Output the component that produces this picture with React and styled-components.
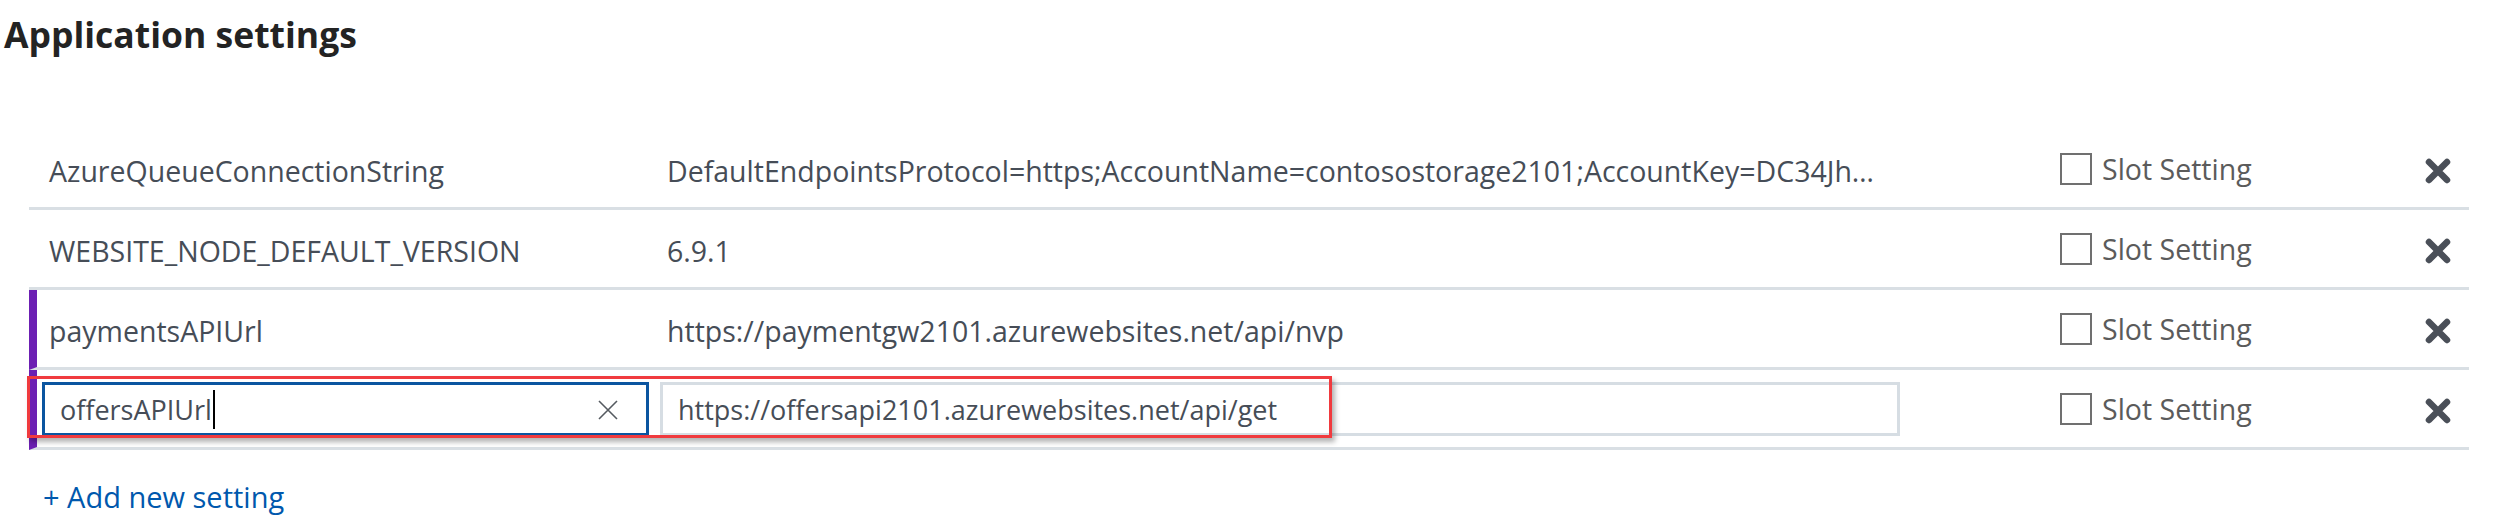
import React from 'react';
import styled, { createGlobalStyle } from 'styled-components';

const GlobalStyle = createGlobalStyle`
  html, body { margin: 0; padding: 0; background: #ffffff; }
  body { font-family: "Open Sans", "Noto Sans", sans-serif; }
`;

const Page = styled.div`
  width: 2507px;
  height: 520px;
  box-sizing: border-box;
  padding-top: 13px;
  overflow: hidden;
`;

const Title = styled.h2`
  margin: 0 0 0 4px;
  font-size: 35.5px;
  font-weight: 700;
  line-height: 42px;
  color: #232323;
`;

const Table = styled.div`
  margin: 75px 0 0 29px;
  width: 2440px;
`;

const Row = styled.div`
  position: relative;
  display: grid;
  grid-template-columns: 607px 1240px 1fr 28px;
  column-gap: 11px;
  align-items: center;
  height: 80px;
  box-sizing: border-box;
  padding: 0 17px 0 ${(p) => (p.$modified ? '5px' : '13px')};
  border-left: ${(p) => (p.$modified ? '8px solid #6c1fb3' : 'none')};
  border-bottom: 3px solid #d9dfe4;
`;

const CellText = styled.div`
  min-width: 0;
  padding: 5px 8px 0 7px;
  font-size: 28.5px;
  color: #464d57;
  white-space: nowrap;
  overflow: hidden;
  text-overflow: ellipsis;
`;

const Field = styled.div`
  display: flex;
  align-items: center;
  height: 54px;
  box-sizing: border-box;
  border: 3px solid ${(p) => (p.$focused ? '#0b55a0' : '#d6dde3')};
  padding: 2px 28px 0 15px;
  font-size: 27px;
  color: #464d57;
  background: #ffffff;
  white-space: nowrap;
`;

const Caret = styled.span`
  display: inline-block;
  width: 2px;
  height: 39px;
  margin-left: 1px;
  background: #000000;
`;

const ClearButton = styled.span`
  display: flex;
  margin-left: auto;
  color: #555a60;
`;

const SlotLabel = styled.label`
  display: flex;
  align-items: center;
  gap: 10px;
  padding-left: 149px;
  font-size: 28.5px;
  color: #5b5b5b;
  white-space: nowrap;
`;

const CheckBox = styled.span`
  flex: none;
  width: 32px;
  height: 32px;
  box-sizing: border-box;
  border: 2px solid #707070;
  background: #ffffff;
`;

const DeleteButton = styled.span`
  display: flex;
  width: 28px;
  height: 28px;
  margin-top: 4px;
  color: #4a4f58;
`;

const Annotation = styled.div`
  position: absolute;
  left: -10px;
  top: 6px;
  width: 1305px;
  height: 62px;
  box-sizing: border-box;
  border: 3px solid #f03a3e;
  box-shadow: 3px 4px 5px rgba(0, 0, 0, 0.3);
  pointer-events: none;
`;

const AddLink = styled.a`
  display: inline-block;
  margin: 29px 0 0 43px;
  font-size: 29px;
  line-height: 36px;
  color: #0058ad;
  text-decoration: none;
`;

const DeleteIcon = () => (
  <svg width="28" height="28" viewBox="0 0 28 28">
    <path d="M5 5 L23 23 M23 5 L5 23" stroke="currentColor" strokeWidth="6.5" strokeLinecap="round" />
  </svg>
);

const ClearIcon = () => (
  <svg width="20" height="20" viewBox="0 0 20 20">
    <path d="M1 1 L19 19 M19 1 L1 19" stroke="currentColor" strokeWidth="1.6" />
  </svg>
);

const settings = [
  {
    name: 'AzureQueueConnectionString',
    value: 'DefaultEndpointsProtocol=https;AccountName=contosostorage2101;AccountKey=DC34Jh…',
  },
  { name: 'WEBSITE_NODE_DEFAULT_VERSION', value: '6.9.1' },
  { name: 'paymentsAPIUrl', value: 'https://paymentgw2101.azurewebsites.net/api/nvp', modified: true },
];

const SlotSetting = () => (
  <SlotLabel>
    <CheckBox />
    Slot Setting
  </SlotLabel>
);

export default function App() {
  return (
    <Page>
      <GlobalStyle />
      <Title>Application settings</Title>
      <Table>
        {settings.map((s) => (
          <Row key={s.name} $modified={s.modified}>
            <CellText>{s.name}</CellText>
            <CellText>{s.value}</CellText>
            <SlotSetting />
            <DeleteButton>
              <DeleteIcon />
            </DeleteButton>
          </Row>
        ))}
        <Row $modified>
          <Field $focused>
            offersAPIUrl
            <Caret />
            <ClearButton>
              <ClearIcon />
            </ClearButton>
          </Field>
          <Field>https://offersapi2101.azurewebsites.net/api/get</Field>
          <SlotSetting />
          <DeleteButton>
            <DeleteIcon />
          </DeleteButton>
          <Annotation />
        </Row>
      </Table>
      <AddLink href="#">+ Add new setting</AddLink>
    </Page>
  );
}
